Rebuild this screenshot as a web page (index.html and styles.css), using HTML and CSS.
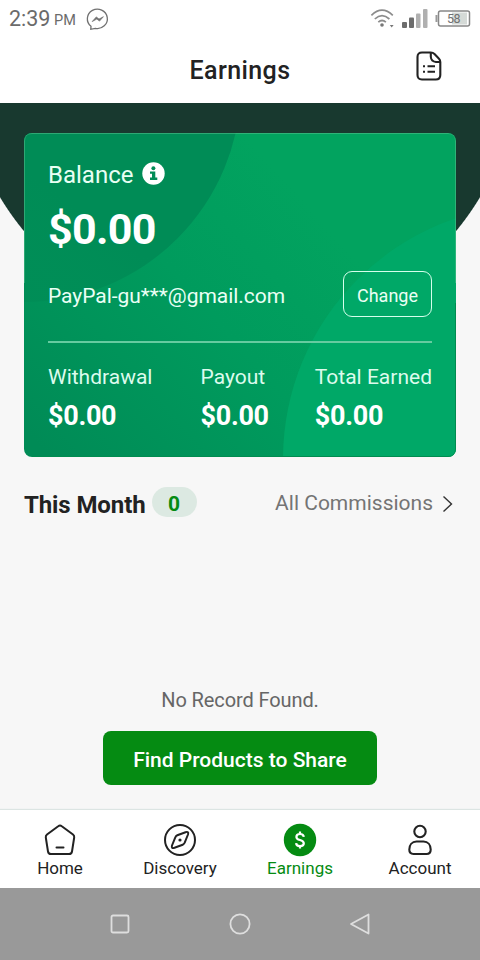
FILE: index.html
```html
<!DOCTYPE html>
<html lang="en">
<head>
<meta charset="utf-8">
<title>Earnings</title>
<link rel="stylesheet" href="styles.css">
</head>
<body>
<div class="app">
  <div class="status">
    <span class="time">2:39</span><span class="pm">PM</span>
    <svg class="messenger" width="24" height="24" viewBox="0 0 24 24" fill="none" stroke="#707070" stroke-width="1.300"><path d="M5 19.300A10 9.700 0 1 1 9.300 21.300L4.800 22.300Z"/><path d="M6.200 14.600L10.300 9.900L13 12.100L17.400 9.700L13.500 14.100L10.800 12Z" fill="#707070" stroke-width=".7"/></svg>
    <svg class="signals" width="102" height="22" viewBox="0 0 102 22" fill="none">
      <g stroke="#8c8c8c" stroke-width="1.700"><path d="M1.400 7.300Q12 -3 22.800 7.300"/><path d="M4.800 11Q12 4.200 19.400 11"/><path d="M8.300 14.200Q12 10.800 15.900 14.200"/></g>
      <circle cx="12" cy="17" r="1.800" fill="#777"/><path d="M19.800 17H23.600L21.700 19.500Z" fill="#777"/>
      <rect x="32" y="14" width="5" height="6" rx="1" fill="#6d6d6d"/><rect x="39" y="9.500" width="5" height="10.500" rx="1" fill="#6d6d6d"/><rect x="46" y="5.500" width="4.500" height="14.500" rx="1" fill="#b0b0b0"/><rect x="53" y="1" width="4.500" height="19" rx="1" fill="#b0b0b0"/>
      <rect x="68.500" y="3" width="31" height="15" rx="2" fill="#fff" stroke="#888" stroke-width="1.500"/><rect x="82" y="4.500" width="15" height="12" fill="#d5dad7"/><path d="M66.500 7V14" stroke="#999" stroke-width="2"/>
      <text x="77" y="14.800" class="charge">58</text>
    </svg>
  </div>
  <header class="header">
    <h1>Earnings</h1>
    <svg class="doc" width="26" height="30" viewBox="0 0 26 30" fill="none" stroke="#222" stroke-width="2.100" stroke-linejoin="round"><path d="M6 1.500H14.800Q17 1.500 18.500 3L22.800 7.500Q24.300 9 24.300 11V24Q24.300 28.500 19.800 28.500H6Q1.500 28.500 1.500 24V6Q1.500 1.500 6 1.500Z"/><path d="M14.800 1.500V6Q15.300 10.500 20 11H24.300"/><path d="M7 15.300h2M11.500 15.300H19M7 20.700h2M11.500 20.700H19" stroke-width="1.900"/></svg>
  </header>
  <main class="main">
    <section class="card">
      <svg class="card-art" width="432" height="324" viewBox="0 0 432 324">
        <defs>
          <linearGradient id="base" x1="30" y1="330" x2="300" y2="90" gradientUnits="userSpaceOnUse"><stop offset="0" stop-color="#008b56"/><stop offset=".6" stop-color="#009b5d"/><stop offset="1" stop-color="#02a35f"/></linearGradient>
          <linearGradient id="shade" x1="90" y1="100" x2="40" y2="170" gradientUnits="userSpaceOnUse"><stop offset="0" stop-color="#008c56"/><stop offset="1" stop-color="#008c56" stop-opacity=".75"/></linearGradient>
        </defs>
        <rect width="432" height="324" fill="url(#base)"/><circle cx="0" cy="-48" r="217" fill="url(#shade)"/><circle cx="513" cy="326" r="254" fill="#00a867"/>
        <path d="M.5 150V8Q.5 .5 8 .5H424Q431.500 .5 431.500 8V150" fill="none" stroke="#5cc491" stroke-opacity=".5"/>
        <path d="M431.500 170V316Q431.500 323.500 424 323.500H8" fill="none" stroke="#008c50"/>
      </svg>
      <div class="balance">Balance <svg width="23" height="23" viewBox="0 0 23 23"><circle cx="11.500" cy="11.500" r="11.200" fill="#fff"/><circle cx="11.400" cy="6.200" r="2" fill="#008c56"/><path d="M8 9.500H13.300V15.500H15.300V17.900H8V15.500H10V11.800H8Z" fill="#008c56"/></svg></div>
      <div class="amount">$0.00</div>
      <div class="account"><span>PayPal-gu***@gmail.com</span><button class="change">Change</button></div>
      <div class="stats">
        <div><span class="label">Withdrawal</span><b>$0.00</b></div>
        <div><span class="label">Payout</span><b>$0.00</b></div>
        <div><span class="label">Total Earned</span><b>$0.00</b></div>
      </div>
    </section>
    <div class="month">
      <h2>This Month</h2><span class="count">0</span>
      <span class="all">All Commissions</span>
      <svg width="12" height="18" viewBox="0 0 12 18" fill="none" stroke="#333" stroke-width="1.400"><path d="M1.500 1.500L9.500 9L1.500 16.500"/></svg>
    </div>
    <div class="empty"><p>No Record Found.</p><button class="find">Find Products to Share</button></div>
  </main>
  <nav class="tabs">
    <div class="tab"><svg width="34" height="34" viewBox="0 0 34 34" fill="none" stroke="#222" stroke-width="2" stroke-linejoin="round" stroke-linecap="round"><path d="M15.200 3.200Q17 1.800 18.800 3.200L30 11.500Q31.500 12.700 31.200 14.500L29 28.500Q28.600 31 26 31H8Q5.400 31 5 28.500L2.800 14.500Q2.500 12.700 4 11.500Z"/><path d="M13.500 24.500H20.500"/></svg><span>Home</span></div>
    <div class="tab"><svg width="34" height="34" viewBox="0 0 34 34" fill="none" stroke="#222" stroke-width="2" stroke-linejoin="round"><circle cx="17" cy="17" r="15"/><path d="M14.300 12.300L22.500 9.200Q26 8 25 11.500L21.700 19.700Q21 21.200 19.700 21.700L11.500 24.800Q8 26 9 22.500L12.300 14.300Q13 12.800 14.300 12.300Z"/><circle cx="17" cy="17" r="1.600" fill="#222" stroke="none"/></svg><span>Discovery</span></div>
    <div class="tab active"><svg width="34" height="34" viewBox="0 0 34 34" fill="none"><circle cx="17" cy="17" r="16.200" fill="#058b12"/><path d="M20.800 13.900Q20.500 11 17 11Q13.400 11 13.400 13.900Q13.400 16 17 17Q20.800 18 20.800 20.300Q20.800 23.100 17 23.100Q13.300 23.100 13.100 20.100M17 8.500V11M17 23V25.500" stroke="#fff" stroke-width="2.200"/></svg><span>Earnings</span></div>
    <div class="tab"><svg width="34" height="34" viewBox="0 0 34 34" fill="none" stroke="#222" stroke-width="2.100"><circle cx="17" cy="8.500" r="5.700"/><path d="M13.500 18.500H20.500C25 18.500 27.700 22 27.700 26.500C27.700 29.500 26.500 31 23.500 31H10.500C7.500 31 6.300 29.500 6.300 26.500C6.300 22 9 18.500 13.500 18.500Z"/></svg><span>Account</span></div>
  </nav>
  <div class="system">
    <svg width="22" height="22" viewBox="0 0 22 22"><rect x="2.500" y="2.500" width="17" height="17" rx="1.500"/></svg>
    <svg width="22" height="22" viewBox="0 0 22 22"><circle cx="11" cy="11" r="9.600"/></svg>
    <svg width="22" height="22" viewBox="0 0 22 22"><path d="M2 11L19.500 1.500V20.500Z"/></svg>
  </div>
</div>
</body>
</html>
```
FILE: styles.css
```css
* { box-sizing: border-box; }
body { margin: 0; font-family: Roboto, sans-serif; color: #222; }
.app { width: 480px; height: 960px; display: flex; flex-direction: column; overflow: hidden; background: #f7f7f7; }
.status { height: 38px; flex: none; display: flex; background: #fff; color: #6b6b6b; padding: 0 8px 0 9px; line-height: 38px; white-space: nowrap; }
.time { font-size: 21.500px; width: 45px; }
.pm { font-size: 14.500px; line-height: 41px; width: 23px; }
.messenger { margin: 7px 0 0 9px; }
.signals { margin: 8px 0 0 auto; }
.charge { font-family: Roboto, sans-serif; font-size: 12.500px; letter-spacing: -.5px; fill: #707070; }
.header { height: 65px; flex: none; background: #fff; display: grid; grid-template-columns: 1fr auto 1fr; }
h1 { grid-column: 2; margin: 0; font-size: 25px; font-weight: 500; line-height: 65px; letter-spacing: .4px; }
.doc { justify-self: end; margin: 13px 38px 0 0; }
.main { flex: 1; min-height: 0; padding: 30px 24px 0; background: radial-gradient(circle at 240px -50px, #18392f 279.500px, transparent 280.500px); }
.card { position: relative; height: 324px; padding: 24px; border-radius: 8px; overflow: hidden; color: #fff; }
.card-art { position: absolute; inset: 0; }
.card > div { position: relative; }
.balance { display: flex; align-items: center; height: 35px; gap: 9px; font-size: 24px; color: #e9fff4; }
.balance svg { margin-top: -3px; }
.amount { height: 76px; line-height: 75px; font-size: 43px; font-weight: 700; letter-spacing: -.7px; }
.account { display: flex; align-items: center; justify-content: space-between; height: 52px; font-size: 21px; color: #eafff5; letter-spacing: -.04px; }
.account span { padding-top: 4px; }
.change { width: 89px; height: 46px; border: 1.500px solid #d5ffec; border-radius: 9px; background: none; color: #eafff5; font: 400 18px Roboto, sans-serif; padding: 3px 0 0; }
.stats { display: flex; justify-content: space-between; margin-top: 21px; padding-top: 15px; border-top: 2px solid #66cba0; }
.label, .stats b { display: block; white-space: nowrap; }
.label { font-size: 21px; line-height: 38px; color: #dcfbed; }
.stats div:nth-child(2) { position: relative; left: 1px; }
.stats b { font-size: 27px; line-height: 40px; letter-spacing: -.3px; }
.month { display: flex; align-items: center; height: 92px; }
h2 { margin: 4px 0 0; font-size: 24px; font-weight: 700; letter-spacing: -.1px; }
.count { width: 45px; height: 30px; margin: -2px auto 0 6px; border-radius: 15px; background: #dce9e2; color: #058b12; font-size: 21px; font-weight: 700; line-height: 34px; text-align: center; }
.all { font-size: 21px; color: #747474; }
.month svg { margin: 1px 2px 0 9px; }
.empty { padding-top: 138px; display: flex; flex-direction: column; align-items: center; }
.empty p { margin: 0; font-size: 20px; line-height: 26px; color: #666; letter-spacing: -.1px; }
.find { width: 274px; height: 54px; margin-top: 18px; border: 0; border-radius: 8px; background: #058b12; color: #fff; font: 500 21px Roboto, sans-serif; padding: 3px 0 0; }
.tabs { height: 78px; flex: none; display: grid; grid-template-columns: repeat(4, 1fr); background: #fff; box-shadow: 0 -1px 1px #dce5e3; }
.tab { display: flex; flex-direction: column; align-items: center; padding-top: 13px; font-size: 17px; line-height: 22px; }
.tab svg { flex: none; }
.active { color: #058b12; }
.system { height: 72px; flex: none; display: flex; justify-content: center; align-items: center; gap: 98px; background: #999; }
.system svg { fill: none; stroke: #dedede; stroke-width: 1.800; stroke-linejoin: round; }
```
